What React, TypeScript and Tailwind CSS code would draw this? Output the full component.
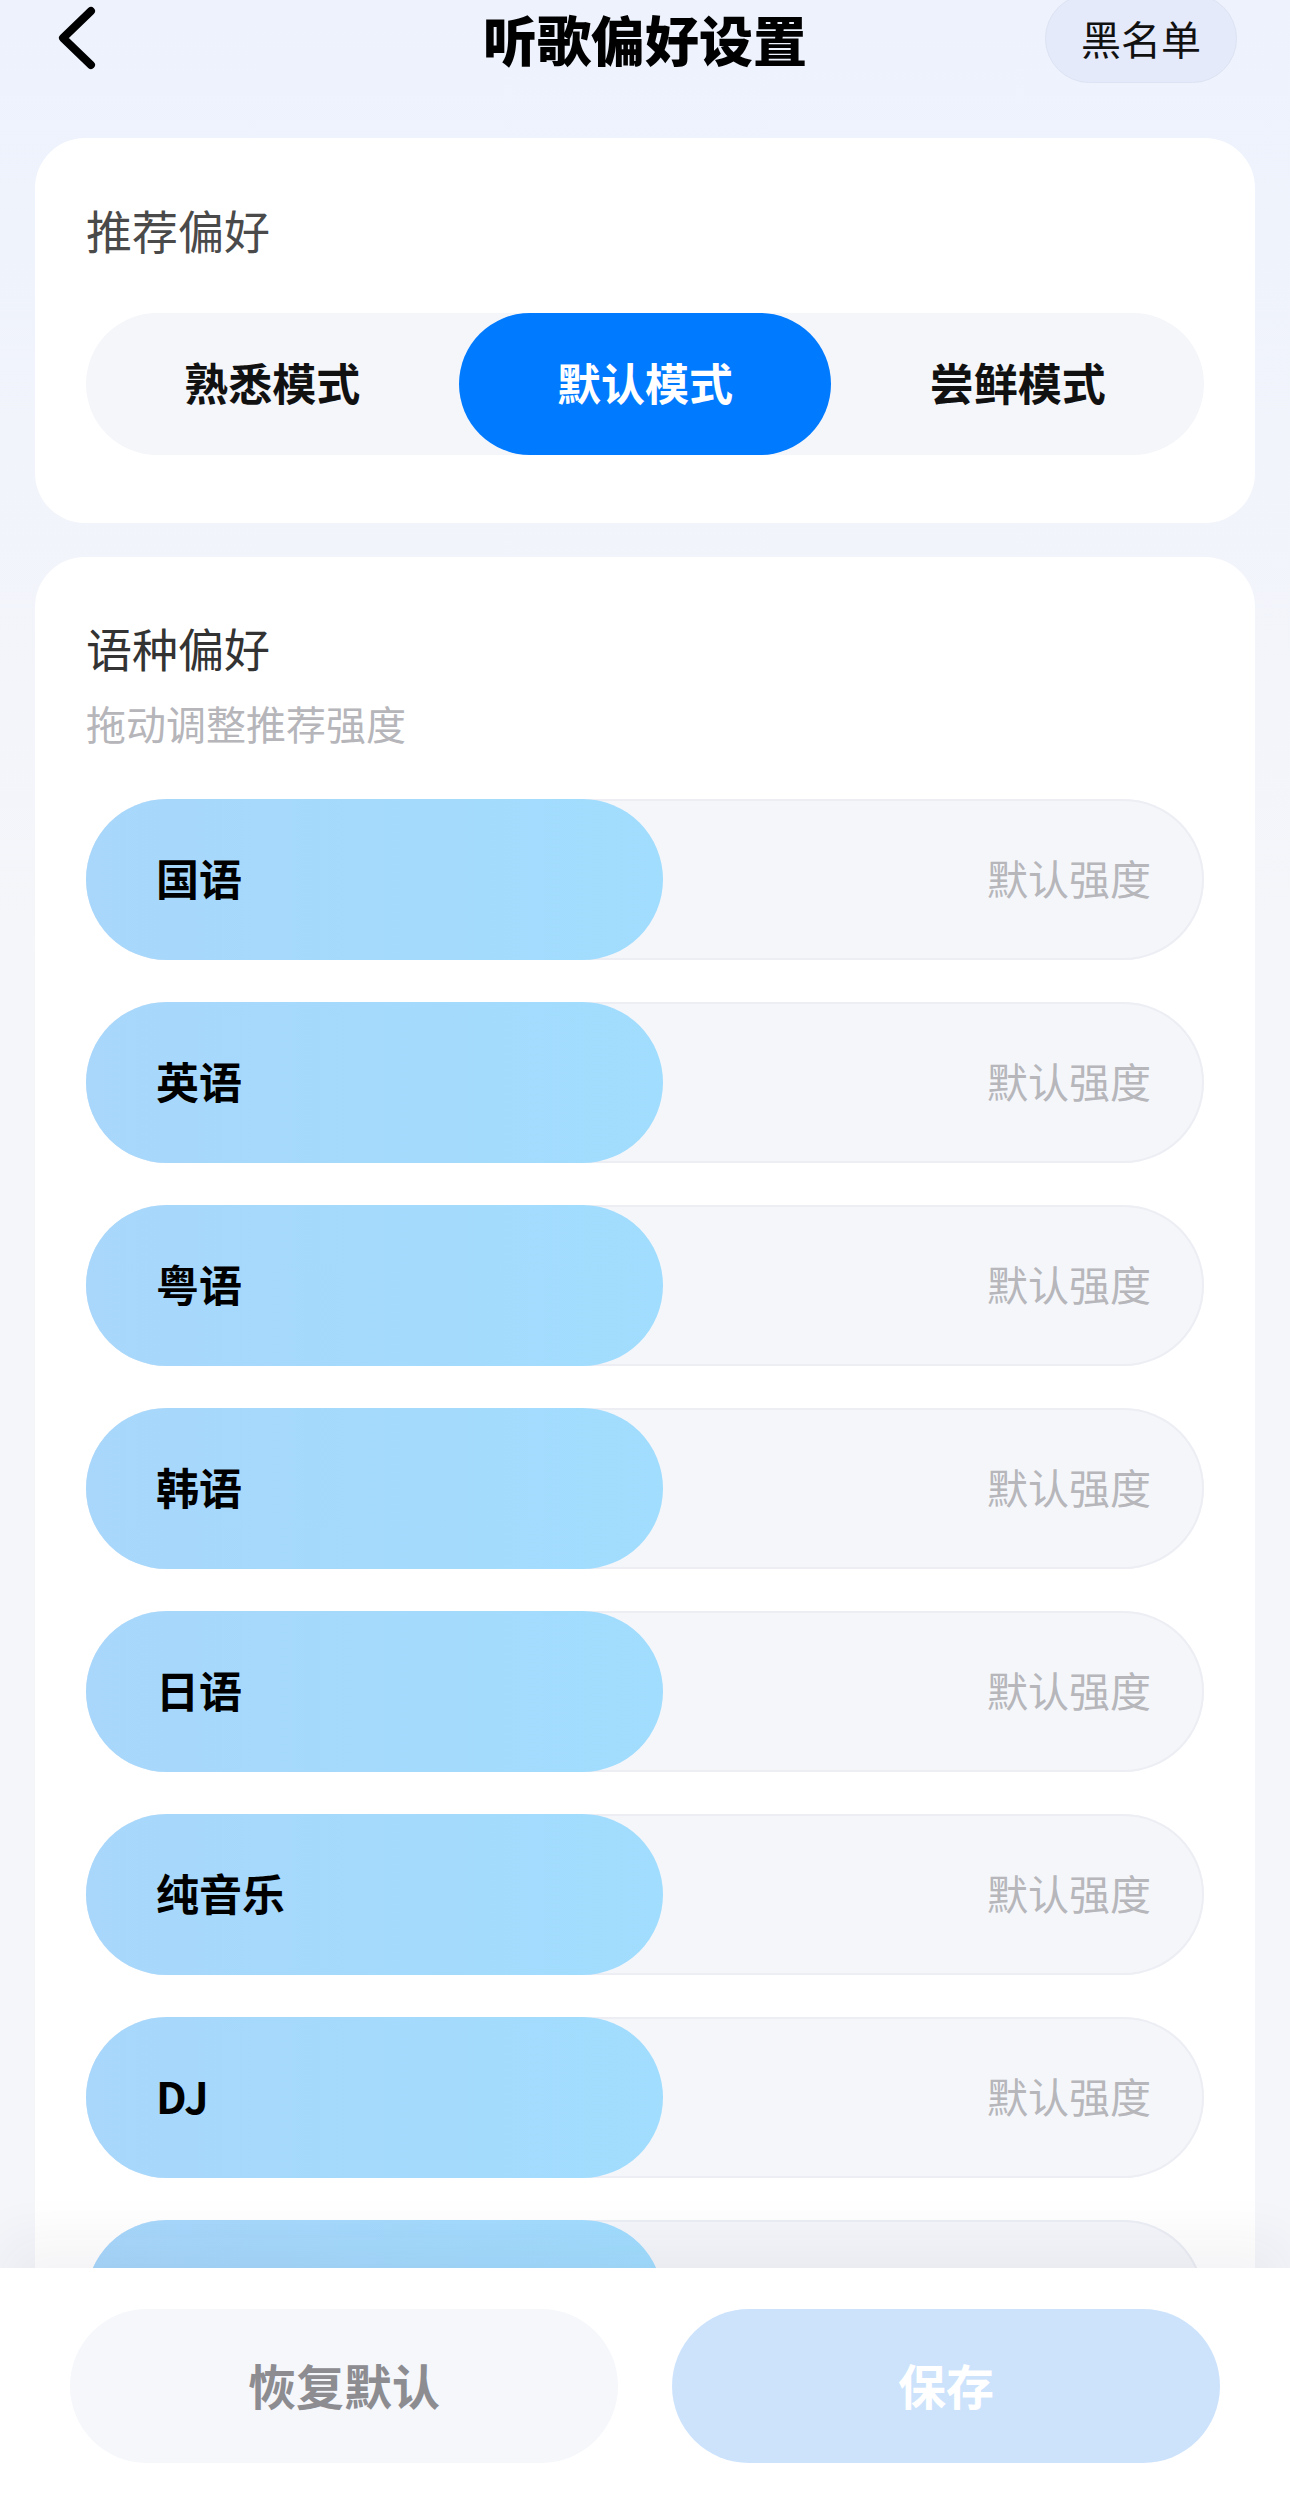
import React from "react";

const FONT = { fontFamily: '"Noto Sans CJK SC", "Noto Sans", sans-serif' };

const MODES = ["熟悉模式", "默认模式", "尝鲜模式"];
// last row sits under the bottom bar, only its top edge shows
const LANGS = ["国语", "英语", "粤语", "韩语", "日语", "纯音乐", "DJ", ""];

function Header() {
  return (
    <div className="grid h-[138px] grid-cols-[1fr_auto_1fr] items-start">
      <div className="pl-[55px] pt-[5px]">
        <svg width="42" height="66" viewBox="0 0 42 66" fill="none">
          <path
            d="M36 6 L8 33 L36 60"
            stroke="#000"
            strokeWidth="8"
            strokeLinecap="round"
            strokeLinejoin="round"
          />
        </svg>
      </div>
      <h1 className="mt-[12px] text-[54px] font-black leading-none text-black">听歌偏好设置</h1>
      <div className="flex justify-end pr-[53px]">
        <button className="-mt-[6px] flex h-[89px] w-[192px] items-center justify-center rounded-full border border-[#dde3f3] bg-[#e4eafa] pb-[2px] text-[40px] leading-none text-[#111]">
          黑名单
        </button>
      </div>
    </div>
  );
}

function ModeCard() {
  return (
    <div className="rounded-[50px] bg-white px-[51px] pb-[68px] pt-[68px]">
      <div className="text-[46px] leading-none text-[#4a4a4a]">推荐偏好</div>
      <div className="mt-[61px] flex h-[142px] rounded-full bg-[#f5f6fa]">
        {MODES.map((m, i) => (
          <div
            key={m}
            className={
              i === 1
                ? "flex flex-1 items-center justify-center rounded-full bg-[#007aff] pb-[5px] text-[44px] font-semibold leading-none text-white"
                : "flex flex-1 items-center justify-center pb-[5px] text-[44px] font-semibold leading-none text-[#111]"
            }
          >
            {m}
          </div>
        ))}
      </div>
    </div>
  );
}

function LangRow({ label }: { label: string }) {
  return (
    <div className="flex h-[161px] shrink-0 items-center rounded-full bg-[#f5f6fa] pb-[5px] shadow-[inset_0_0_0_2px_#eceef4]">
      <div className="-mb-[5px] flex h-[161px] w-[577px] items-center rounded-full bg-gradient-to-r from-[#a8d7fb] to-[#a1ddfe] pb-[5px] pl-[70px]">
        <span className="text-[43px] font-semibold leading-none text-black">{label}</span>
      </div>
      {label && (
        <span className="ml-auto pr-[53px] text-[41px] leading-none text-[#b6b6bb]">默认强度</span>
      )}
    </div>
  );
}

function LangCard() {
  return (
    <div className="mt-[34px] rounded-t-[50px] bg-white px-[51px] pb-[60px] pt-[67px]">
      <div className="text-[46px] leading-none text-[#333]">语种偏好</div>
      <div className="mt-[33px] text-[40px] leading-none text-[#b5b5ba]">拖动调整推荐强度</div>
      <div className="mt-[56px] flex flex-col gap-[42px]">
        {LANGS.map((l, i) => (
          <LangRow key={i} label={l} />
        ))}
      </div>
    </div>
  );
}

function BottomBar() {
  return (
    <div className="relative z-10 h-[252px] shrink-0 bg-white px-[70px] pt-[41px] shadow-[0_-30px_50px_rgba(40,40,70,0.05)]">
      <div className="grid grid-cols-2 gap-[54px]">
        <button className="flex h-[154px] items-center justify-center rounded-full bg-[#f5f7fb] pb-[5px] text-[48px] font-semibold leading-none text-[#8c8c91]">
          恢复默认
        </button>
        <button className="flex h-[154px] items-center justify-center rounded-full bg-[#cde3fc] pb-[5px] text-[48px] font-semibold leading-none text-white">
          保存
        </button>
      </div>
    </div>
  );
}

export default function App() {
  return (
    <div
      className="flex h-[2520px] w-[1290px] flex-col overflow-hidden bg-[linear-gradient(180deg,#edf2fd_0px,#f1f4fb_450px,#f5f6fa_950px)]"
      style={FONT}
    >
      <div className="min-h-0 flex-1 overflow-hidden">
        <Header />
        <div className="px-[35px]">
          <ModeCard />
          <LangCard />
        </div>
      </div>
      <BottomBar />
    </div>
  );
}
